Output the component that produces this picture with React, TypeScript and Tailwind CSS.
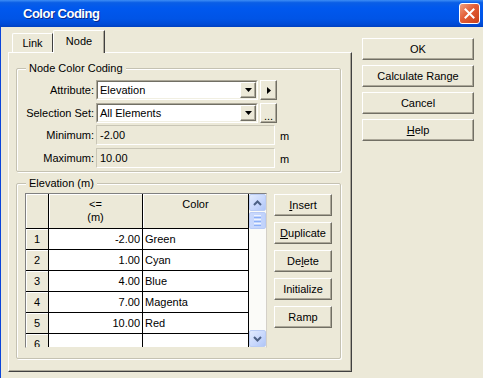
import React from "react";

const raised =
  "border border-t-white border-l-white border-r-[#716F64] border-b-[#716F64] shadow-[inset_-1px_-1px_0_#ACA899]";

function Btn({ children, className = "" }: { children: React.ReactNode; className?: string }) {
  return (
    <div className={`flex items-center justify-center bg-[#ECE9D8] ${raised} ${className}`}>{children}</div>
  );
}

function DownTri() {
  return (
    <svg width="7" height="4" viewBox="0 0 7 4">
      <path d="M0 0h7L3.5 4z" fill="#000" />
    </svg>
  );
}

function Combo({ value }: { value: string }) {
  return (
    <div className="w-[162px] h-[20px] border border-t-[#ACA899] border-l-[#ACA899] border-r-white border-b-white">
      <div className="h-full flex items-center bg-white border border-t-[#716F64] border-l-[#716F64] border-r-[#F1EFE2] border-b-[#F1EFE2]">
        <span className="pl-[2px] flex-1">{value}</span>
        <Btn className="w-[16px] h-[16px]">
          <DownTri />
        </Btn>
      </div>
    </div>
  );
}

function ReadField({ value }: { value: string }) {
  return (
    <div className="w-[179px] h-[20px] flex items-center pl-[3px] border border-t-[#C9C6B6] border-l-[#C9C6B6] border-r-white border-b-white">
      {value}
    </div>
  );
}

function Group({ label, className = "", children }: { label: string; className?: string; children: React.ReactNode }) {
  return (
    <div
      className={`relative w-[325px] border border-[#C5C2B2] rounded-[2px] shadow-[inset_1px_1px_0_#fff,1px_1px_0_#fff] ${className}`}
    >
      <span className="absolute -top-[7px] left-[9px] px-[3px] bg-[#ECE9D8] leading-[13px]">{label}</span>
      {children}
    </div>
  );
}

function ScrollArrow({ up }: { up: boolean }) {
  return (
    <div className="w-[17px] h-[17px] flex items-center justify-center rounded-[2px] border border-[#BACCF4] bg-[linear-gradient(135deg,#E1EBFE_0%,#C6D6FC_60%,#B0C6F6_100%)]">
      <svg width="9" height="6" viewBox="0 0 9 6">
        <path
          d={up ? "M1 5L4.5 1.5L8 5" : "M1 1L4.5 4.5L8 1"}
          fill="none"
          stroke="#4D6185"
          strokeWidth="2"
        />
      </svg>
    </div>
  );
}

const rows = [
  ["1", "-2.00", "Green"],
  ["2", "1.00", "Cyan"],
  ["3", "4.00", "Blue"],
  ["4", "7.00", "Magenta"],
  ["5", "10.00", "Red"],
  ["6", "", ""],
];

export default function App() {
  return (
    <div className="w-[483px] h-[378px] overflow-hidden bg-[#ECE9D8] font-['Liberation_Sans',Arial,sans-serif] text-[11px] leading-[13px] text-black">
      {/* Title bar */}
      <div className="h-[27px] flex items-center pl-[23px] pr-[3px] bg-[linear-gradient(180deg,#3D8DF5_0%,#0A5EE6_10%,#0058EE_30%,#0054E6_70%,#004BD6_90%,#0040C0_100%)]">
        <span className="text-white font-bold text-[13px] tracking-[-0.5px] [text-shadow:1px_1px_0_#0A2A8C]">
          Color Coding
        </span>
        <div className="ml-auto w-[21px] h-[21px] flex items-center justify-center rounded-[3px] border border-white bg-[linear-gradient(135deg,#F0A080_0%,#E35D36_45%,#C9401A_100%)]">
          <svg width="11" height="11" viewBox="0 0 11 11">
            <path d="M1.5 1.5L9.5 9.5M9.5 1.5L1.5 9.5" stroke="#fff" strokeWidth="2" strokeLinecap="square" />
          </svg>
        </div>
      </div>

      {/* Body */}
      <div className="flex h-[351px] border-l border-[#0B45DA]">
        <div className="ml-[7px] pt-[1px] w-[344px]">
          {/* Tabs */}
          <div className="flex items-end h-[24px] pl-[4px]">
            <div className="w-[41px] h-[19px] flex items-center justify-center rounded-tl-[2px] border-l border-t border-white border-r border-r-[#404040]">
              Link
            </div>
            <div className="relative z-10 -mb-px w-[52px] h-[23px] flex items-center justify-center pb-[2px] bg-[#ECE9D8] rounded-tl-[2px] border-l border-t border-white border-r border-r-[#404040] shadow-[inset_-1px_0_0_#ACA899]">
              Node
            </div>
          </div>

          {/* Panel */}
          <div className="h-[320px] pl-[7px] pt-[15px] border border-t-white border-l-white border-r-[#404040] border-b-[#404040] shadow-[inset_-1px_-1px_0_#ACA899]">
            <Group label="Node Color Coding" className="h-[104px] pt-[11px]">
              <div className="flex items-center h-[20px]">
                <span className="w-[79px] text-right pr-[2px]">Attribute:</span>
                <Combo value="Elevation" />
                <Btn className="ml-[2px] w-[17px] h-[20px]">
                  <svg width="4" height="7" viewBox="0 0 4 7">
                    <path d="M0 0v7l4-3.5z" fill="#000" />
                  </svg>
                </Btn>
              </div>
              <div className="flex items-center h-[20px] mt-[3px]">
                <span className="w-[79px] text-right pr-[2px]">Selection Set:</span>
                <Combo value="All Elements" />
                <Btn className="ml-[2px] w-[17px] h-[20px] items-end">
                  <span className="leading-[12px]">...</span>
                </Btn>
              </div>
              <div className="flex items-center h-[20px] mt-[2px]">
                <span className="w-[79px] text-right pr-[2px]">Minimum:</span>
                <ReadField value="-2.00" />
                <span className="ml-[5px] mt-[2px]">m</span>
              </div>
              <div className="flex items-center h-[20px] mt-[3px]">
                <span className="w-[79px] text-right pr-[2px]">Maximum:</span>
                <ReadField value="10.00" />
                <span className="ml-[5px] mt-[2px]">m</span>
              </div>
            </Group>

            <Group label="Elevation (m)" className="mt-[11px] h-[176px] flex pt-[9px] pl-[8px]">
              {/* Grid */}
              <div className="w-[242px] h-[155px] flex border border-t-[#808080] border-l-[#808080] border-r-[#D4D0C8] border-b-[#ECE9D8]">
                <div className="w-[223px] overflow-hidden flex flex-col">
                  <div className="flex h-[35px] shrink-0">
                    <div className="w-[23px] bg-[#ECE9D8] border-r border-b border-black shadow-[inset_1px_1px_0_#fff]" />
                    <div className="w-[94px] pt-[4px] text-center bg-[#ECE9D8] border-r border-b border-black shadow-[inset_1px_1px_0_#fff]">
                      &lt;=
                      <br />
                      (m)
                    </div>
                    <div className="w-[106px] pt-[4px] text-center bg-[#ECE9D8] border-r border-b border-black shadow-[inset_1px_1px_0_#fff]">
                      Color
                    </div>
                  </div>
                  {rows.map((r) => (
                    <div key={r[0]} className="flex h-[21px] shrink-0">
                      <div className="w-[23px] flex items-center justify-center bg-[#ECE9D8] border-r border-b border-black shadow-[inset_1px_1px_0_#fff]">
                        {r[0]}
                      </div>
                      <div className="w-[94px] flex items-center justify-end pr-[2px] bg-white border-r border-b border-black">
                        {r[1]}
                      </div>
                      <div className="w-[106px] flex items-center pl-[2px] bg-white border-r border-b border-black">
                        {r[2]}
                      </div>
                    </div>
                  ))}
                </div>
                {/* Scrollbar */}
                <div className="w-[17px] flex flex-col bg-[#FBFBF8]">
                  <ScrollArrow up />
                  <div className="w-[17px] h-[17px] mt-[1px] flex flex-col items-center justify-center gap-[1px] rounded-[2px] border border-[#B8CAF5] bg-[linear-gradient(90deg,#CAD9FD_0%,#C0D2FB_100%)]">
                    <div className="w-[7px] h-px bg-[#EEF4FE]" />
                    <div className="w-[7px] h-px bg-[#8CB0F8]" />
                    <div className="w-[7px] h-px bg-[#EEF4FE]" />
                    <div className="w-[7px] h-px bg-[#8CB0F8]" />
                    <div className="w-[7px] h-px bg-[#EEF4FE]" />
                    <div className="w-[7px] h-px bg-[#8CB0F8]" />
                  </div>
                  <div className="flex-1" />
                  <ScrollArrow up={false} />
                </div>
              </div>

              {/* Grid buttons */}
              <div className="ml-[7px] pt-[1px] flex flex-col gap-[6px]">
                <Btn className="w-[58px] h-[22px]">
                  <span>
                    <u>I</u>nsert
                  </span>
                </Btn>
                <Btn className="w-[58px] h-[22px]">
                  <span>
                    <u>D</u>uplicate
                  </span>
                </Btn>
                <Btn className="w-[58px] h-[22px]">
                  <span>
                    De<u>l</u>ete
                  </span>
                </Btn>
                <Btn className="w-[58px] h-[22px]">Initialize</Btn>
                <Btn className="w-[58px] h-[22px]">Ramp</Btn>
              </div>
            </Group>
          </div>
        </div>

        {/* Right buttons */}
        <div className="ml-[10px] pt-[11px] flex flex-col gap-[5px]">
          <Btn className="w-[112px] h-[22px]">OK</Btn>
          <Btn className="w-[112px] h-[22px]">Calculate Range</Btn>
          <Btn className="w-[112px] h-[22px]">Cancel</Btn>
          <Btn className="w-[112px] h-[22px]">
            <span>
              <u>H</u>elp
            </span>
          </Btn>
        </div>
      </div>
    </div>
  );
}
